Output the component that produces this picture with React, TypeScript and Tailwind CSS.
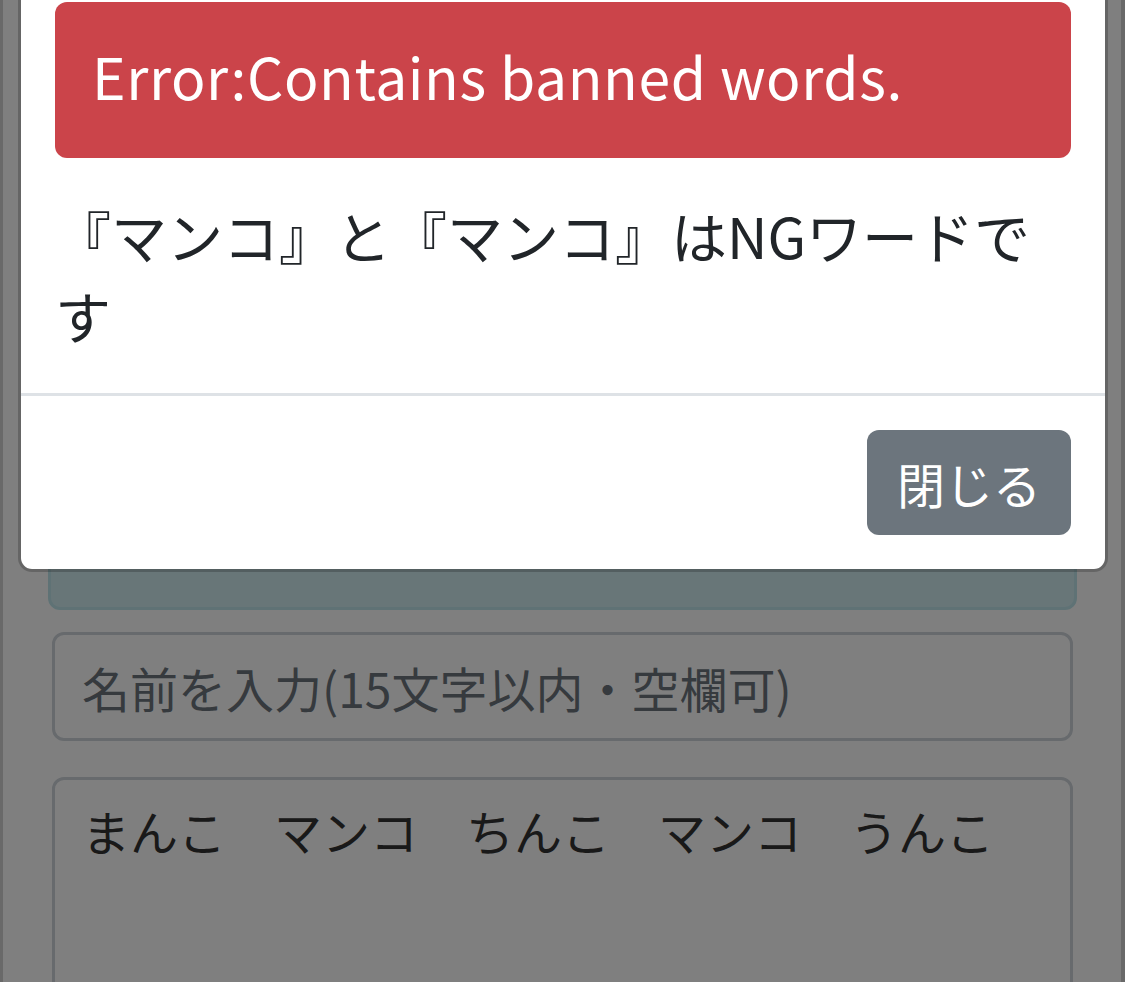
import React from 'react';

const App: React.FC = () => {
  return (
    <div className="relative h-[982px] w-[1125px] overflow-hidden bg-white font-['Noto_Sans_CJK_JP',sans-serif]">
      {/* page underneath the modal */}
      <div className="h-full border-l-[3px] border-r-[4px] border-[#d2d2d2] pl-[45px] pr-[44px] pt-[380px]">
        <div className="h-[230px] rounded-[12px] border-[3px] border-[#bee5eb] bg-[#d1ecf1]"></div>
        <div className="mx-[4px] mt-[22px] flex flex-col gap-[36px]">
          <input
            type="text"
            placeholder="名前を入力(15文字以内・空欄可)"
            className="h-[109px] w-full rounded-[12px] border-[3px] border-[#ced4da] bg-white px-[27px] text-[48px] text-[#495057] outline-none placeholder:text-[#6c757d]"
          />
          <textarea
            defaultValue="まんこ　マンコ　ちんこ　マンコ　うんこ"
            className="h-[300px] w-full resize-none rounded-[12px] border-[3px] border-[#ced4da] bg-white px-[27px] py-[14px] text-[48px] leading-[72px] text-[#333333] outline-none"
          />
        </div>
      </div>

      {/* backdrop */}
      <div className="absolute inset-0 bg-black/50"></div>

      {/* modal */}
      <div className="absolute left-[18px] top-[-35px] w-[1090px] rounded-[14px] border-[3px] border-black/20 bg-white bg-clip-padding">
        <div className="px-[34px] pt-[34px] pb-[38px]">
          <div className="flex h-[156px] items-center rounded-[12px] bg-[#cb444a] px-[37px] pb-[9px] text-[57px] tracking-[0.6px] text-white">
            Error:Contains banned words.
          </div>
          <p className="mt-[37px] text-[56px] leading-[80px] text-[#212529]">
            『マンコ』と『マンコ』はNGワードです
          </p>
        </div>
        <div className="flex justify-end border-t-[3px] border-[#dee2e6] p-[34px]">
          <button className="h-[105px] rounded-[12px] bg-[#6c757d] px-[30px] text-[48px] text-white">
            閉じる
          </button>
        </div>
      </div>
    </div>
  );
};

export default App;
